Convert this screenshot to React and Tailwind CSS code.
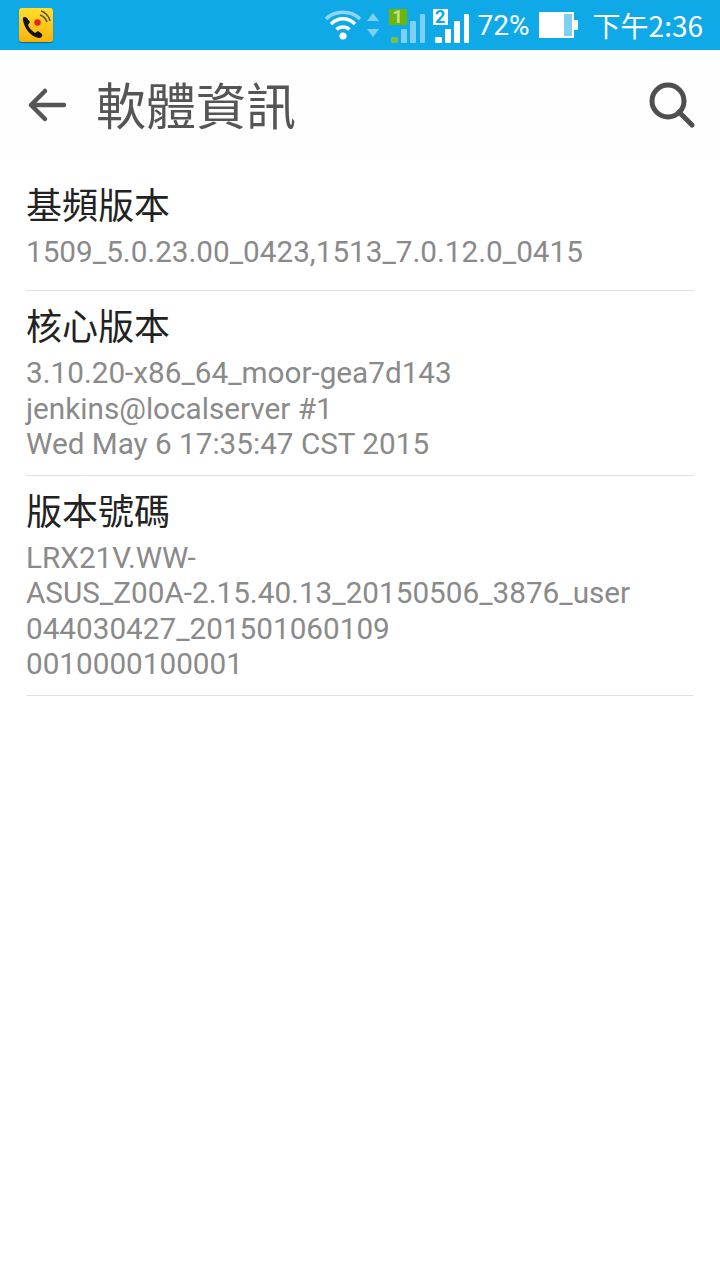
import React from "react";

const cjk = { fontFamily: '"Noto Sans CJK TC", "Noto Sans", sans-serif' };

const sections = [
  { title: "基頻版本", lines: ["1509_5.0.23.00_0423,1513_7.0.12.0_0415"] },
  {
    title: "核心版本",
    lines: ["3.10.20-x86_64_moor-gea7d143", "jenkins@localserver #1", "Wed May 6 17:35:47 CST 2015"],
  },
  {
    title: "版本號碼",
    lines: ["LRX21V.WW-", "ASUS_Z00A-2.15.40.13_20150506_3876_user", "044030427_201501060109", "0010000100001"],
  },
];

const AppIcon = () => (
  <div className="w-[34px] h-[34px] rounded-[3px] bg-gradient-to-b from-[#ffdf2a] to-[#f9b200] shadow-[0_1px_1px_rgba(0,0,0,0.4)]">
    <svg viewBox="0 0 34 34" className="w-full h-full">
      <path d="M4 12 C3 9 6 8 8 10 L11 14 L9 17 C10 20 13 23 16 25 L19 23 L23 26 C24 28 22 30 20 30 C12 29 5 20 4 12 Z" fill="#111" />
      <circle cx="18.5" cy="14.5" r="3.2" fill="#e8202a" />
      <path d="M22 3 C26 4 30 8 31 13 M21 7 C24 8 27 11 28 14" fill="none" stroke="#555" strokeWidth="1.6" />
    </svg>
  </div>
);

const Wifi = () => (
  <svg viewBox="0 0 38 32" className="w-[38px] h-8">
    <path d="M2 10 C11 1 27 1 36 10" fill="none" stroke="#8fd6f5" strokeWidth="3.5" />
    <path d="M7 15 C14 8 24 8 31 15" fill="none" stroke="#fff" strokeWidth="3.5" />
    <path d="M12.5 20.5 C16 17 22 17 25.5 20.5" fill="none" stroke="#fff" strokeWidth="3.5" />
    <circle cx="19" cy="27" r="3.6" fill="#fff" />
  </svg>
);

const Arrows = () => (
  <svg viewBox="0 0 12 26" className="w-3 h-[26px]">
    <path d="M6 1 L12 9 H0 Z" fill="#7fcff2" />
    <path d="M6 25 L12 17 H0 Z" fill="#7fcff2" />
  </svg>
);

// signal bars with the sim number badge on top
const Signal = ({ label, badge, badgeText, dot, bars }) => (
  <div className="relative w-[36px] h-[34px]">
    <svg viewBox="0 0 36 34" className="w-full h-full">
      <rect x="2" y="28" width="7" height="6" rx="1" fill={dot} />
      <rect x="12" y="20" width="6" height="14" rx="1" fill={bars} />
      <rect x="21" y="12" width="6" height="22" rx="1" fill={bars} />
      <rect x="31" y="5" width="5" height="29" rx="1" fill={bars} />
    </svg>
    <div
      className={`absolute left-0 top-0 h-[16px] flex items-center justify-center text-[18px] font-bold leading-none ${badge} ${badgeText}`}
      style={{ fontFamily: "Roboto, sans-serif" }}
    >
      {label}
    </div>
  </div>
);

const Battery = () => (
  <div className="flex items-center">
    <div className="w-[35px] h-[26px] bg-white flex justify-end">
      <div className="w-[8px] h-[22px] mt-[2px] mr-[2px] bg-[#7fcff2]" />
    </div>
    <div className="w-[4px] h-[10px] bg-white" />
  </div>
);

export default function App() {
  return (
    <div className="w-[720px] h-[1280px] bg-white flex flex-col" style={{ fontFamily: "Roboto, sans-serif" }}>
      {/* Status bar */}
      <div className="h-[50px] bg-[#10a9e8] flex items-center pl-[19px] pr-[17px] text-white">
        <AppIcon />
        <div className="ml-auto flex items-center">
          <Wifi />
          <div className="ml-[5px]"><Arrows /></div>
          <div className="ml-[10px] mt-[1px]">
            <Signal label="1" badge="w-[18px] bg-[#6eb40a]" badgeText="text-[#c4e08a]" dot="#7ac143" bars="#7fcff2" />
          </div>
          <div className="ml-[8px] mt-[1px]">
            <Signal label="2" badge="w-[15px] bg-white" badgeText="text-[#10a9e8]" dot="#fff" bars="#fff" />
          </div>
          <span className="ml-[9px] mt-[1px] text-[28px] leading-none">72%</span>
          <div className="ml-[9px]"><Battery /></div>
          <span className="ml-[15px] text-[28px] leading-none" style={cjk}>下午2:36</span>
        </div>
      </div>

      {/* Title bar */}
      <div className="h-[110px] bg-[#fefefe] flex items-center pl-[27px] pr-[25px]">
        <svg viewBox="0 0 40 36" className="w-10 h-9 text-[#555]" fill="none" stroke="currentColor" strokeWidth="4.5" strokeLinecap="round" strokeLinejoin="round">
          <path d="M4 18 H37 M18 4 L4 18 L18 32" />
        </svg>
        <h1 className="ml-[29px] mb-[5px] text-[50px] leading-none text-[#555]" style={cjk}>軟體資訊</h1>
        <svg viewBox="0 0 46 46" className="ml-auto w-[46px] h-[46px] text-[#4f4f4f]" fill="none" stroke="currentColor" strokeWidth="5" strokeLinecap="round">
          <circle cx="19" cy="19" r="16" />
          <path d="M30 30 L43 43" />
        </svg>
      </div>

      {/* Info list */}
      <div className="px-[26px] pt-[10px]">
        {sections.map((s) => (
          <div key={s.title} className="min-h-[121px] border-b border-[#e0e0e0] pt-[4px] pb-[13px]">
            <div className="text-[36px] leading-[58px] text-[#222]" style={cjk}>{s.title}</div>
            <div className="text-[29.7px] leading-[35.5px] text-[#8a8a8a] mt-[2px]">
              {s.lines.map((l) => (
                <div key={l}>{l}</div>
              ))}
            </div>
          </div>
        ))}
      </div>
    </div>
  );
}
